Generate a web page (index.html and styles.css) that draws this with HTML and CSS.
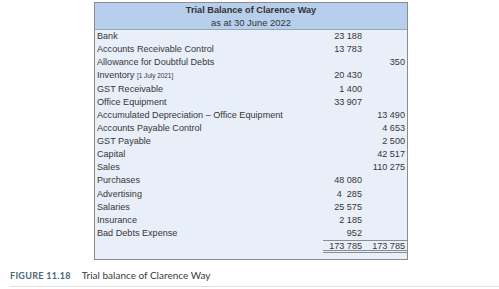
FILE: index.html
```html
<!DOCTYPE html>
<html>
<head>
<meta charset="utf-8">
<link rel="stylesheet" href="styles.css">
</head>
<body>
<div class="tb">
  <div class="head">
    <div class="title">Trial Balance of Clarence Way</div>
    <div class="sub">as at 30 June 2022</div>
  </div>
  <div class="rows">
    <div class="l">Bank</div><div class="d">23 188</div><div class="c"></div>
    <div class="l">Accounts Receivable Control</div><div class="d">13 783</div><div class="c"></div>
    <div class="l">Allowance for Doubtful Debts</div><div class="d"></div><div class="c">350</div>
    <div class="l">Inventory <span class="sm">[1 July 2021]</span></div><div class="d">20 430</div><div class="c"></div>
    <div class="l">GST Receivable</div><div class="d">1 400</div><div class="c"></div>
    <div class="l">Office Equipment</div><div class="d">33 907</div><div class="c"></div>
    <div class="l">Accumulated Depreciation – Office Equipment</div><div class="d"></div><div class="c">13 490</div>
    <div class="l">Accounts Payable Control</div><div class="d"></div><div class="c">4 653</div>
    <div class="l">GST Payable</div><div class="d"></div><div class="c">2 500</div>
    <div class="l">Capital</div><div class="d"></div><div class="c">42 517</div>
    <div class="l">Sales</div><div class="d"></div><div class="c">110 275</div>
    <div class="l">Purchases</div><div class="d">48 080</div><div class="c"></div>
    <div class="l">Advertising</div><div class="d">4&nbsp; 285</div><div class="c"></div>
    <div class="l">Salaries</div><div class="d">25 575</div><div class="c"></div>
    <div class="l">Insurance</div><div class="d">2 185</div><div class="c"></div>
    <div class="l">Bad Debts Expense</div><div class="d">952</div><div class="c"></div>
    <div class="l"></div><div class="d tot">173 785</div><div class="c tot">173 785</div>
  </div>
</div>
<div class="caption"><span class="fig">FIGURE 11.18</span><span class="ctext">Trial balance of Clarence Way</span></div>
</body>
</html>
```
FILE: styles.css
```css
html, body { margin: 0; padding: 0; background: #ffffff; }
body { width: 499px; height: 289px; overflow: hidden; font-family: "Liberation Sans", Arial, sans-serif; color: #363636; }
.tb {
  margin: 2px 0 0 94px;
  width: 312px;
  border: 1px solid #8c8c8c;
  background: #e9eff9;
  height: 256px;
}
.head {
  background: #b7cfec;
  border-bottom: 1px solid #9aa6b4;
  height: 26px;
  display: flex;
  flex-direction: column;
  align-items: center;
}
.title { font-weight: bold; font-size: 9.2px; line-height: 13px; color: #333; padding-top: 1px; }
.sub { font-size: 9.4px; line-height: 12px; color: #333; }
.rows {
  display: grid;
  grid-template-columns: 228px 42px 42px;
  grid-auto-rows: 13.13px;
  font-size: 9.1px;
  line-height: 13px;
}
.l { padding-left: 2px; white-space: nowrap; }
.d { text-align: right; padding-right: 3px; }
.c { text-align: right; padding-right: 2px; }
.sm { font-size: 6.4px; }
.tot { border-top: 1px solid #8c8c8c; border-bottom: 3px double #8c8c8c; line-height: 10px; }
.caption {
  margin: 8px 0 0 10px;
  width: 489px;
  border-bottom: 1px solid #e2e2e2;
  height: 18px;
  line-height: 15px;
  font-family: "Lato", "Open Sans", sans-serif;
  display: flex;
  align-items: baseline;
}
.fig { font-weight: bold; font-size: 9px; color: #4d6680; margin-right: 11px; letter-spacing: 0.3px; }
.ctext { color: #3a3a3a; font-size: 10px; }
```
